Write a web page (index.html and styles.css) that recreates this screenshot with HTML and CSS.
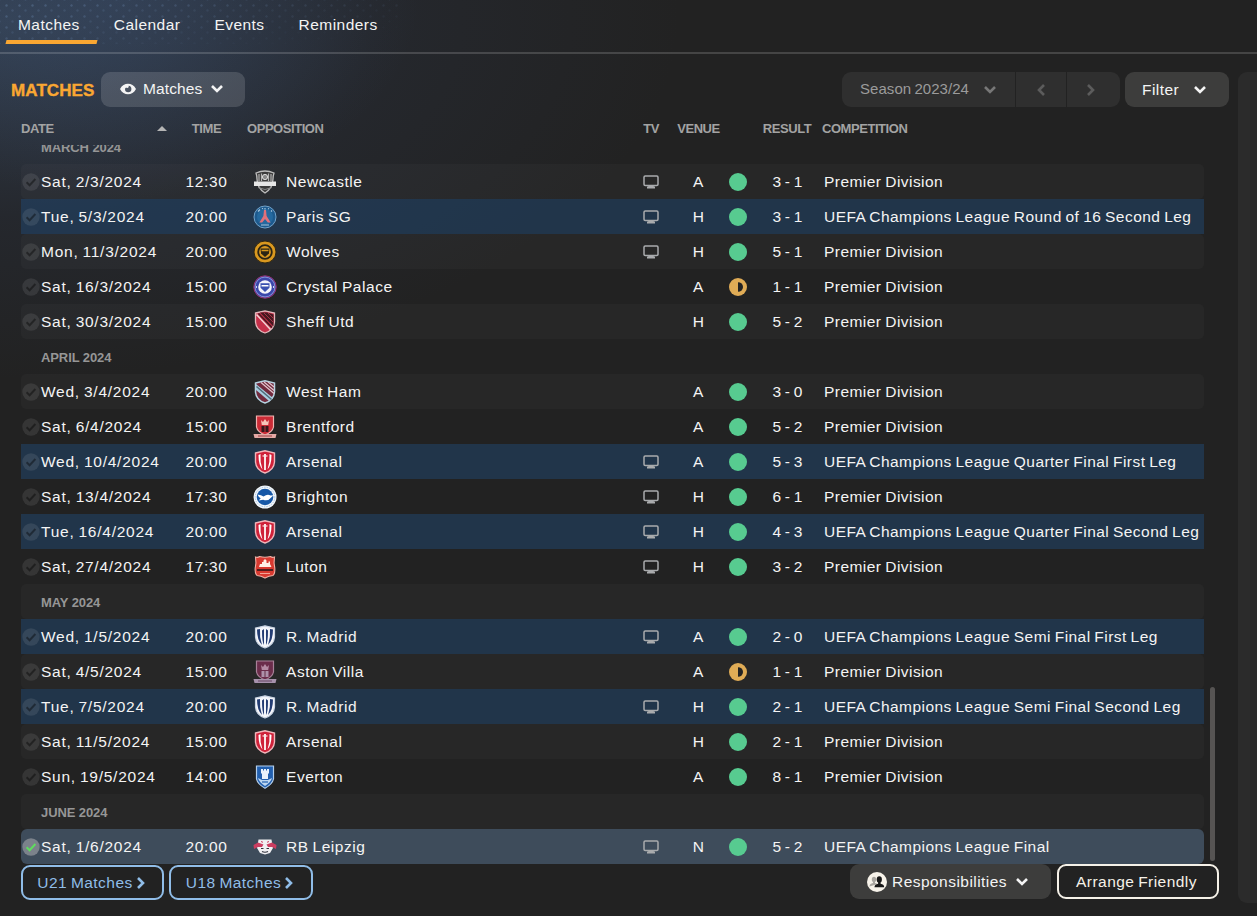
FILE: index.html
```html
<!DOCTYPE html>
<html lang="en">
<head>
  <meta charset="UTF-8">
  <meta name="viewport" content="width=device-width, initial-scale=1.0">
  <title>Matches</title>
  <link rel="stylesheet" href="styles.css">
</head>
<body>
<svg class="sprite" aria-hidden="true">
  <!-- ui icons -->
  <symbol id="check" viewBox="0 0 18 18"><circle class="check-bg" cx="9" cy="9" r="8.7"/><path class="check-mark" d="M4.6 9.3l3 3 5.8-6.3" fill="none" stroke-width="2"/></symbol>
  <symbol id="tv" viewBox="0 0 16 14"><rect x="1" y="1" width="14" height="9.4" rx="1.2" fill="none" stroke="currentColor" stroke-width="1.5"/><path d="M5.200 10.500h5.600v1h1.200V13.500H4V11.500h1.200z" fill="currentColor"/></symbol>
  <symbol id="down" viewBox="0 0 14 10"><path d="M2 2l5 5 5-5" fill="none" stroke="currentColor" stroke-width="2.600"/></symbol>
  <symbol id="right" viewBox="0 0 10 14"><path d="M2 2l5 5-5 5" fill="none" stroke="currentColor" stroke-width="2.600"/></symbol>
  <symbol id="left" viewBox="0 0 10 14"><path d="M8 2L3 7l5 5" fill="none" stroke="currentColor" stroke-width="2.600"/></symbol>
  <symbol id="eye" viewBox="0 0 16 12"><path fill-rule="evenodd" fill="currentColor" d="M0 6C2 2.200 4.800.7 8 .7S14 2.200 16 6c-2 3.800-4.800 5.300-8 5.300S2 9.800 0 6zm5 0a3.200 3.200 0 0 0 6.400 0A3.200 3.200 0 0 0 8.600 2.800C9.200 4.200 8 5.400 6.600 4.800 5.900 4.600 5.200 4.900 5 6z"/></symbol>
  <symbol id="people" viewBox="0 0 20 20"><circle cx="10" cy="10" r="10" fill="#f7f3ea"/><path fill="#a9a6a0" d="M7 4.800a2.200 2.700 0 0 1 0 5.400 2.200 2.700 0 0 1 0-5.400zM2.500 14.500c0-2.500 1.500-3 3.500-3.500V9.500h2V11c1 .2 2 .5 2.500 1z"/><path fill="#171717" d="M12.300 4.200a2.600 3.300 0 0 1 0 6.600 2.600 3.300 0 0 1 0-6.600zM7.500 15.300c0-2.600 1.500-3 3.600-3.600V10h2.500v1.700c2.100.6 3.600 1 3.600 3.600z"/></symbol>
  <symbol id="draw" viewBox="0 0 18 18"><circle cx="9" cy="9" r="9" fill="#e0ac56"/><path d="M9 4.200a5 4.800 0 0 1 0 9.600z" fill="#232323"/></symbol>

  <!-- club crests -->
  <symbol id="newcastle" viewBox="0 0 24 24"><path d="M3 3Q12-1 21 3q-1 3-1 6 0 9-8 14-8-5-8-14 0-3-1-6z" fill="#3b3b3b" stroke="#bdbdbd" stroke-width="1.300"/><path d="M6 4v7M8.500 3.500V11M15.500 3.500V11M18 4v7" stroke="#b4b4b4" stroke-width="1.200"/><circle cx="12" cy="7" r="2.600" fill="#888" stroke="#ddd"/><path d="M1 11.500h22V16H1z" fill="#e6e6e6"/><path d="M5 17.500l7 2 7-2" fill="none" stroke="#888"/></symbol>
  <symbol id="paris" viewBox="0 0 24 24"><circle cx="12" cy="12" r="11" fill="#1d5a8e" stroke="#72a2c9"/><circle cx="12" cy="12" r="8" fill="#24699f"/><path d="M5 6.500l2-2M9 3.800l1-.5M12 3v1.500M15 3.500l1 .5M18 5.500l1 1" stroke="#a9c8de" stroke-width="1.200"/><path d="M11 5h2l.6 6 4 6.500h-2.800L12 14l-2.800 3.500H6.400l4-6.500z" fill="#e0707a"/><path d="M8 20h8" stroke="#8fb4d0" stroke-width="1.200"/></symbol>
  <symbol id="wolves" viewBox="0 0 24 24"><circle cx="12" cy="12" r="11" fill="#d9981f" stroke="#302712"/><circle cx="12" cy="12" r="6.800" fill="#d9981f" stroke="#2a2415" stroke-width="1.800"/><path d="M7.500 8.500h9l-.6 5L12 17l-3.900-3.500z" fill="#2a2415"/><path d="M8.500 10.500h7" stroke="#d9981f" stroke-width="1.500"/></symbol>
  <symbol id="palace" viewBox="0 0 24 24"><circle cx="12" cy="12" r="11.200" fill="#3a47ab" stroke="#9b3271"/><circle cx="12" cy="12" r="9.900" fill="none" stroke="#a9b2e6" stroke-width=".7"/><circle cx="12" cy="12" r="6.800" fill="#f3f3fa"/><path d="M7.500 8.300h9v4.500L12 17l-4.500-4.200z" fill="#3a51b0"/><path d="M8.500 10h7v1.500h-7z" fill="#fff"/><path d="M3 12h1M20 12h1" stroke="#fff" stroke-width="1.400"/></symbol>
  <symbol id="sheffield" viewBox="0 0 24 24"><path d="M2.500 3L12 .8 21.500 3v9Q21 20 12 23 3 20 2.500 12z" fill="#c5304a" stroke="#e3b9bd" stroke-width="1.300"/><path d="M7 2.500h7l6.500 2v12z" fill="#471820"/><path d="M3.500 4.500l14 15" stroke="#f1d5d6" stroke-width="1.500"/><path d="M5.500 3.500l13.500 14" stroke="#471820" stroke-width="1.600"/><path d="M11 3l9.500 9.500M15 3l5.500 5.500" stroke="#a23446"/></symbol>
  <symbol id="westham" viewBox="0 0 24 24"><path d="M2.500 3L12 .8 21.500 3v9Q21 20 12 23 3 20 2.500 12z" fill="#722b3e" stroke="#b7d3e2" stroke-width="1.500"/><path d="M3 4l17 14-4 3L3 10z" fill="#a9cee0"/><path d="M3.500 6.500l15 13" stroke="#4f6b78" stroke-width="1.500"/><path d="M8 2.500l13 11M11 2l10 8.500M15 2l6 5" stroke="#e3c6cf" stroke-width="1.200"/></symbol>
  <symbol id="brentford" viewBox="0 0 24 24"><path d="M3.500 1h17v11q-1 5-8.500 8-7.500-3-8.500-8z" fill="#cb2b36" stroke="#efb3b0" stroke-width="1.200"/><path d="M8 5l2 2 2-3 2 3 2-2-.8 5H8.800z" fill="#f6c4b9"/><path d="M8.500 11h7v6h-7z" fill="#36171b"/><path d="M12 11v6" stroke="#b63b40"/><path d="M.5 19h23l-1 4h-21z" fill="#e4a9a5"/><path d="M5 21h14" stroke="#9e3f43"/></symbol>
  <symbol id="arsenal" viewBox="0 0 24 24"><path d="M2.500 3L12 .8 21.500 3v9Q21 20 12 23 3 20 2.500 12z" fill="#cf2139" stroke="#f0b6bb" stroke-width="1.400"/><path d="M5.500 5q0 10 4 14.500Q6.800 12 7.500 4zM18.500 5q0 10-4 14.500Q17.200 12 16.500 4z" fill="#fff"/><path d="M12 4v16" stroke="#fae4e6" stroke-width="2"/><path d="M9.500 6h5" stroke="#fae4e6" stroke-width="1.200"/></symbol>
  <symbol id="brighton" viewBox="0 0 24 24"><circle cx="12" cy="12" r="11.500" fill="#f3f7fb"/><circle cx="12" cy="12" r="9.800" fill="none" stroke="#94b7db" stroke-width=".8" stroke-dasharray="1.500 1"/><circle cx="12" cy="12" r="8.300" fill="#1758a7"/><path d="M4.500 9.500q4 .5 6 2 4-3 7-1l3-.3-2.300 2.200q-3 4-8 2.300l-4.500.8 2-2.200q-2-.8-3.200-3.800z" fill="#fff"/></symbol>
  <symbol id="luton" viewBox="0 0 24 24"><path d="M2.500 2q2.500 1 4-.5Q12 3 17.500 1.500q1.500 1.500 4 .5-1 6 .3 11 .5 5-1.800 7.500-4 .2-8 2.500-4-2.300-8-2.500-2.300-2.500-1.800-7.500Q3.500 8 2.500 2z" fill="#d83a30" stroke="#f2b0a5" stroke-width="1.100"/><path d="M6 12l1-3h2V7h1.500V5.500L12 4l1.500 1.500V8h2V6.500H17V9l1.500 3z" fill="#fff0e8"/><path d="M4 14h16v2H4z" fill="#511c1d"/><path d="M7 18.500h10" stroke="#f3a496"/></symbol>
  <symbol id="madrid" viewBox="0 0 24 24"><path d="M2.500 3L12 .8 21.500 3v9Q21 20 12 23 3 20 2.500 12z" fill="#f4f6fa" stroke="#c9d3e2" stroke-width="1.200"/><path d="M4 4.500q0 10.500 5 15.500Q6.300 12 7 4zM20 4.500Q20 15 15 20q2.700-8 2-16z" fill="#223c73"/><path d="M9 5.500L11 4v16Q9 17 9 5.500zM15 5.500L13 4v16q2-3 2-14.500z" fill="#223c73"/></symbol>
  <symbol id="villa" viewBox="0 0 24 24"><path d="M3.500 1h17v11q-1 5-8.500 8-7.500-3-8.500-8z" fill="#6b2d4b" stroke="#a78198" stroke-width="1.200"/><path d="M8 5l2 2 2-3 2 3 2-2-.8 5H8.800z" fill="#b58ba4"/><path d="M8.500 11h7v6h-7z" fill="#ae91aa"/><path d="M12 11v6" stroke="#623048"/><path d="M.5 19h23l-1 4h-21z" fill="#a792ac"/><path d="M5 21h14" stroke="#674562"/></symbol>
  <symbol id="everton" viewBox="0 0 24 24"><path d="M3.500 1h17v13q-1 5-8.500 9.300Q4.500 19 3.500 14z" fill="#225fae" stroke="#b4cfec" stroke-width="1.200"/><path d="M8 4h2v1.500h1V4h2v1.500h1V4h2v4l-1 1v5H9V9L8 8z" fill="#e9f2fc"/><path d="M5 13l4 2h6l4-2q-1 4-7 8-6-4-7-8z" fill="#bfd7ef"/><path d="M9 17h6" stroke="#225fae" stroke-width="1.200"/></symbol>
  <symbol id="leipzig" viewBox="0 0 24 24"><path d="M5.500 4.500h13L20 13l-3 5-5 1.500L7 18l-3-5z" fill="#f0eff2"/><path d="M.5 10L5 7.500l5.500 2L9 12H5l-4 2zM23.500 10L19 7.500l-5.500 2L15 12h4l4 2z" fill="#cb3d60"/><path d="M8 6.500l2 .8M16 6.500l-2 .8" stroke="#cb3d60"/><path d="M8 13.500h2.500M13.500 13.500H16M9 16.500q3 1.500 6 0" stroke="#33343e" stroke-width="1.100" fill="none"/></symbol>
</svg>

<nav class="tabs">
  <a class="tab active">Matches</a>
  <a class="tab">Calendar</a>
  <a class="tab">Events</a>
  <a class="tab">Reminders</a>
</nav>

<div class="page">
  <main class="panel">
    <div class="toolbar">
      <h1>MATCHES</h1>
      <button class="btn view-btn"><svg class="icon-eye"><use href="#eye"/></svg>Matches<svg class="icon-down"><use href="#down"/></svg></button>
      <div class="season">
        <button class="season-name">Season 2023/24<svg class="icon-down"><use href="#down"/></svg></button>
        <button class="season-step"><svg class="icon-side"><use href="#left"/></svg></button>
        <button class="season-step"><svg class="icon-side"><use href="#right"/></svg></button>
      </div>
      <button class="btn filter-btn">Filter<svg class="icon-down"><use href="#down"/></svg></button>
    </div>

    <div class="columns">
      <span class="col-date">DATE<i class="sort"></i></span>
      <span class="center">TIME</span>
      <span class="col-opposition">OPPOSITION</span>
      <span class="center">TV</span>
      <span class="center">VENUE</span>
      <span></span>
      <span class="center">RESULT</span>
      <span>COMPETITION</span>
    </div>

    <div class="list-wrap">
      <div class="list">
        <div class="month">MARCH 2024</div>
        <div class="row"><svg class="check"><use href="#check"/></svg><span class="date">Sat, 2/3/2024</span><span class="center time">12:30</span><svg class="crest"><use href="#newcastle"/></svg><span class="team">Newcastle</span><svg class="tv"><use href="#tv"/></svg><span class="center">A</span><i class="win"></i><span class="center score">3 - 1</span><span>Premier Division</span></div>
        <div class="row euro"><svg class="check"><use href="#check"/></svg><span class="date">Tue, 5/3/2024</span><span class="center time">20:00</span><svg class="crest"><use href="#paris"/></svg><span class="team">Paris SG</span><svg class="tv"><use href="#tv"/></svg><span class="center">H</span><i class="win"></i><span class="center score">3 - 1</span><span>UEFA Champions League Round of 16 Second Leg</span></div>
        <div class="row"><svg class="check"><use href="#check"/></svg><span class="date">Mon, 11/3/2024</span><span class="center time">20:00</span><svg class="crest"><use href="#wolves"/></svg><span class="team">Wolves</span><svg class="tv"><use href="#tv"/></svg><span class="center">H</span><i class="win"></i><span class="center score">5 - 1</span><span>Premier Division</span></div>
        <div class="row"><svg class="check"><use href="#check"/></svg><span class="date">Sat, 16/3/2024</span><span class="center time">15:00</span><svg class="crest"><use href="#palace"/></svg><span class="team">Crystal Palace</span><span></span><span class="center">A</span><svg class="draw"><use href="#draw"/></svg><span class="center score">1 - 1</span><span>Premier Division</span></div>
        <div class="row"><svg class="check"><use href="#check"/></svg><span class="date">Sat, 30/3/2024</span><span class="center time">15:00</span><svg class="crest"><use href="#sheffield"/></svg><span class="team">Sheff Utd</span><span></span><span class="center">H</span><i class="win"></i><span class="center score">5 - 2</span><span>Premier Division</span></div>
        <div class="month">APRIL 2024</div>
        <div class="row"><svg class="check"><use href="#check"/></svg><span class="date">Wed, 3/4/2024</span><span class="center time">20:00</span><svg class="crest"><use href="#westham"/></svg><span class="team">West Ham</span><span></span><span class="center">A</span><i class="win"></i><span class="center score">3 - 0</span><span>Premier Division</span></div>
        <div class="row"><svg class="check"><use href="#check"/></svg><span class="date">Sat, 6/4/2024</span><span class="center time">15:00</span><svg class="crest"><use href="#brentford"/></svg><span class="team">Brentford</span><span></span><span class="center">A</span><i class="win"></i><span class="center score">5 - 2</span><span>Premier Division</span></div>
        <div class="row euro"><svg class="check"><use href="#check"/></svg><span class="date">Wed, 10/4/2024</span><span class="center time">20:00</span><svg class="crest"><use href="#arsenal"/></svg><span class="team">Arsenal</span><svg class="tv"><use href="#tv"/></svg><span class="center">A</span><i class="win"></i><span class="center score">5 - 3</span><span>UEFA Champions League Quarter Final First Leg</span></div>
        <div class="row"><svg class="check"><use href="#check"/></svg><span class="date">Sat, 13/4/2024</span><span class="center time">17:30</span><svg class="crest"><use href="#brighton"/></svg><span class="team">Brighton</span><svg class="tv"><use href="#tv"/></svg><span class="center">H</span><i class="win"></i><span class="center score">6 - 1</span><span>Premier Division</span></div>
        <div class="row euro"><svg class="check"><use href="#check"/></svg><span class="date">Tue, 16/4/2024</span><span class="center time">20:00</span><svg class="crest"><use href="#arsenal"/></svg><span class="team">Arsenal</span><svg class="tv"><use href="#tv"/></svg><span class="center">H</span><i class="win"></i><span class="center score">4 - 3</span><span>UEFA Champions League Quarter Final Second Leg</span></div>
        <div class="row"><svg class="check"><use href="#check"/></svg><span class="date">Sat, 27/4/2024</span><span class="center time">17:30</span><svg class="crest"><use href="#luton"/></svg><span class="team">Luton</span><svg class="tv"><use href="#tv"/></svg><span class="center">H</span><i class="win"></i><span class="center score">3 - 2</span><span>Premier Division</span></div>
        <div class="month">MAY 2024</div>
        <div class="row euro"><svg class="check"><use href="#check"/></svg><span class="date">Wed, 1/5/2024</span><span class="center time">20:00</span><svg class="crest"><use href="#madrid"/></svg><span class="team">R. Madrid</span><svg class="tv"><use href="#tv"/></svg><span class="center">A</span><i class="win"></i><span class="center score">2 - 0</span><span>UEFA Champions League Semi Final First Leg</span></div>
        <div class="row"><svg class="check"><use href="#check"/></svg><span class="date">Sat, 4/5/2024</span><span class="center time">15:00</span><svg class="crest"><use href="#villa"/></svg><span class="team">Aston Villa</span><span></span><span class="center">A</span><svg class="draw"><use href="#draw"/></svg><span class="center score">1 - 1</span><span>Premier Division</span></div>
        <div class="row euro"><svg class="check"><use href="#check"/></svg><span class="date">Tue, 7/5/2024</span><span class="center time">20:00</span><svg class="crest"><use href="#madrid"/></svg><span class="team">R. Madrid</span><svg class="tv"><use href="#tv"/></svg><span class="center">H</span><i class="win"></i><span class="center score">2 - 1</span><span>UEFA Champions League Semi Final Second Leg</span></div>
        <div class="row"><svg class="check"><use href="#check"/></svg><span class="date">Sat, 11/5/2024</span><span class="center time">15:00</span><svg class="crest"><use href="#arsenal"/></svg><span class="team">Arsenal</span><span></span><span class="center">H</span><i class="win"></i><span class="center score">2 - 1</span><span>Premier Division</span></div>
        <div class="row"><svg class="check"><use href="#check"/></svg><span class="date">Sun, 19/5/2024</span><span class="center time">14:00</span><svg class="crest"><use href="#everton"/></svg><span class="team">Everton</span><span></span><span class="center">A</span><i class="win"></i><span class="center score">8 - 1</span><span>Premier Division</span></div>
        <div class="month">JUNE 2024</div>
        <div class="row euro selected"><svg class="check"><use href="#check"/></svg><span class="date">Sat, 1/6/2024</span><span class="center time">20:00</span><svg class="crest"><use href="#leipzig"/></svg><span class="team">RB Leipzig</span><svg class="tv"><use href="#tv"/></svg><span class="center">N</span><i class="win"></i><span class="center score">5 - 2</span><span>UEFA Champions League Final</span></div>
      </div>
      <div class="scrollbar"></div>
    </div>

    <div class="actions">
      <button class="outline-btn u21">U21 Matches<svg class="icon-next"><use href="#right"/></svg></button>
      <button class="outline-btn u18">U18 Matches<svg class="icon-next"><use href="#right"/></svg></button>
      <button class="btn resp-btn"><svg class="icon-people"><use href="#people"/></svg>Responsibilities<svg class="icon-down"><use href="#down"/></svg></button>
      <button class="outline-btn friendly">Arrange Friendly</button>
    </div>
  </main>
  <aside class="side"></aside>
</div>
</body>
</html>
```

FILE: styles.css
```css
* {
  box-sizing: border-box;
}
body {
  margin: 0;
  height: 916px;
  overflow: hidden;
  background:
    radial-gradient(ellipse 300px 200px at 120px 0, rgba(72, 104, 158, 0.22), rgba(72, 104, 158, 0) 100%),
    radial-gradient(ellipse 680px 360px at 0 20px, rgba(66, 90, 122, 0.5), rgba(48, 62, 90, 0.2) 55%, rgba(48, 62, 90, 0) 100%),
    #222;
  color: #f4f4f4;
  font-family: "Liberation Sans", Arial, sans-serif;
  font-size: 15.5px;
  letter-spacing: 0.46px;
  word-spacing: -1px;
}
button {
  margin: 0;
  padding: 0;
  border: none;
  background: none;
  color: inherit;
  font: inherit;
  letter-spacing: inherit;
  word-spacing: inherit;
  display: flex;
  align-items: center;
  cursor: pointer;
}
.sprite {
  display: none;
}

/* top tabs */
.tabs {
  position: relative;
  display: flex;
  gap: 34px;
  height: 54px;
  padding-left: 18px;
  border-bottom: 2px solid rgba(255, 255, 255, 0.16);
}
/* dotted texture fading out to the right */
.tabs::before {
  content: '';
  position: absolute;
  top: 0;
  left: 0;
  width: 400px;
  height: 44px;
  background:
    radial-gradient(circle, rgba(140, 180, 230, 0.22) 0.8px, transparent 1.6px) 0 0 / 13px 11px,
    radial-gradient(circle, rgba(140, 180, 230, 0.14) 0.8px, transparent 1.6px) 6px 5px / 13px 11px;
  -webkit-mask-image: linear-gradient(170deg, #000 10%, transparent 90%);
  mask-image: linear-gradient(170deg, #000 10%, transparent 90%);
}
.tab {
  position: relative;
  height: 44px;
  line-height: 50px;
}
.tab.active::after {
  content: '';
  position: absolute;
  left: -12px;
  right: -17px;
  bottom: 0;
  height: 4px;
  background: #faa732;
  transform: skewX(-15deg);
}

.page {
  display: flex;
  justify-content: space-between;
  padding-top: 18px;
}
.panel {
  width: 1229px;
}
.side {
  width: 19px;
  height: 831px;
  background: #2b2b2b;
  border-radius: 9px 0 0 9px;
}

/* toolbar */
.toolbar {
  display: flex;
  align-items: center;
  height: 35px;
  padding-left: 11px;
}
.toolbar h1 {
  width: 90px;
  margin: 3px 0 0;
  color: #faa732;
  font-size: 17px;
  line-height: 20px;
  letter-spacing: 0.1px;
  -webkit-text-stroke: 0.4px #faa732;
}
.btn {
  height: 35px;
  border-radius: 9px;
  background: #3d3d3c;
}
.view-btn {
  width: 144px;
  padding: 0 0 2px 19px;
  background: rgba(255, 255, 255, 0.14);
  letter-spacing: 0.1px;
}
.icon-eye {
  width: 16px;
  height: 12px;
  margin-right: 7px;
}
.icon-down {
  width: 14px;
  height: 10px;
  margin-left: 8px;
}
.season {
  display: flex;
  gap: 1px;
  margin-left: auto;
  margin-right: 5px;
  color: #9b9b9b;
}
.season button {
  height: 35px;
  background: #2f2f2f;
}
.season-name {
  width: 173px;
  padding: 0 0 2px 18px;
  border-radius: 9px 0 0 9px;
  font-size: 15px;
  letter-spacing: 0.05px;
}
.season-name .icon-down {
  margin: 2px 0 0 14px;
  color: #777;
}
.season-step {
  width: 50px;
  justify-content: center;
  color: #5c5c5c;
}
.season-step:last-child {
  width: 53px;
  padding-right: 5px;
  border-radius: 0 9px 9px 0;
}
.icon-side {
  width: 10px;
  height: 14px;
}
.filter-btn {
  width: 104px;
  padding-left: 17px;
}
.filter-btn .icon-down {
  margin-left: 14px;
}

/* column titles */
.columns {
  display: grid;
  grid-template-columns: 160px 51px 397px 44px 51px 28px 70px 381px;
  height: 38px;
  padding: 13px 0 0 21px;
  align-items: start;
  color: #a3a3a3;
  font-size: 13px;
  font-weight: bold;
  line-height: 17px;
  letter-spacing: -0.45px;
}
.col-date {
  display: flex;
  justify-content: space-between;
  align-items: center;
  padding-right: 14px;
}
.sort {
  border: 5px solid transparent;
  border-top: none;
  border-bottom: 5px solid #b5b5b5;
}
.col-opposition {
  padding-left: 15px;
}
.center {
  text-align: center;
}

/* match list */
.list-wrap {
  display: flex;
  height: 719px;
  padding-left: 21px;
}
.list {
  display: flex;
  flex-direction: column;
  justify-content: flex-end;
  width: 1183px;
  height: 719px;
  overflow: hidden;
}
.row,
.month {
  flex: none;
  height: 35px;
  line-height: 35px;
  border-radius: 5px;
}
.row:nth-child(even),
.month:nth-child(even) {
  background: rgba(255, 255, 255, 0.022);
}
.row {
  --check-bg: rgba(255, 255, 255, 0.09);
  --check-mark: rgba(0, 0, 0, 0.4);
  display: grid;
  grid-template-columns: 20px 140px 51px 54px 343px 44px 51px 28px 71px 381px;
  align-items: center;
  white-space: nowrap;
}
.month {
  padding: 1px 0 0 20px;
  color: #969696;
  font-size: 13px;
  font-weight: bold;
  letter-spacing: -0.1px;
  word-spacing: 0;
}
.row.euro {
  background: rgba(32, 72, 114, 0.5);
  border-radius: 0;
}
.row.selected {
  --check-bg: #7b828b;
  --check-mark: #5fdc5f;
  background: #3e4c5b;
  border-radius: 6px;
}
.row > :last-child {
  padding-left: 1px;
}
.check {
  width: 18px;
  height: 18px;
  margin-left: 1px;
}
.check-bg {
  fill: var(--check-bg);
}
.check-mark {
  stroke: var(--check-mark);
}
.date {
  letter-spacing: 0.75px;
}
.time {
  letter-spacing: 0.6px;
}
.team {
  letter-spacing: 0.55px;
}
.crest {
  width: 24px;
  height: 24px;
  margin-left: 21px;
}
.tv {
  width: 16px;
  height: 14px;
  justify-self: center;
  color: #a9abad;
}
.win,
.draw {
  width: 18px;
  height: 18px;
  justify-self: center;
}
.win {
  border-radius: 50%;
  background: #57cb90;
}
.score {
  letter-spacing: 0.2px;
}
.scrollbar {
  width: 5px;
  height: 174px;
  margin: 542px 0 0 6px;
  border-radius: 3px;
  background: #565453;
}

/* bottom buttons */
.actions {
  display: flex;
  padding: 0 10px 0 21px;
}
.outline-btn {
  justify-content: center;
  height: 35px;
  margin-top: 1px;
  border: 2px solid #90bde8;
  border-radius: 9px;
  color: #90bde8;
}
.u21 {
  width: 143px;
  margin-right: 5px;
  padding-right: 2px;
}
.u18 {
  width: 144px;
  padding-right: 2px;
}
.icon-next {
  width: 10px;
  height: 14px;
  margin-left: 3px;
}
.resp-btn {
  width: 201px;
  margin-left: auto;
  padding-left: 17px;
}
.icon-people {
  width: 20px;
  height: 20px;
  margin-right: 5px;
}
.friendly {
  width: 162px;
  margin: 0 0 0 6px;
  padding-right: 3px;
  border-color: #f5f1e8;
  color: #f5f1e8;
}
```
